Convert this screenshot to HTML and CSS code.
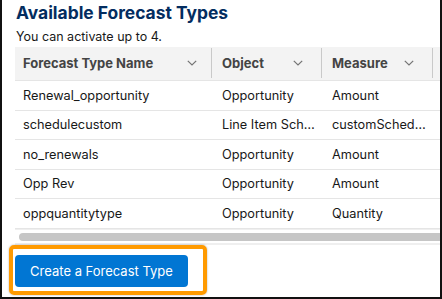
FILE: index.html
```html
<!DOCTYPE html>
<html lang="en">
<head>
    <meta charset="UTF-8">
    <meta name="viewport" content="width=device-width, initial-scale=1.0">
    <title>Available Forecast Types</title>
    <link rel="stylesheet" href="styles.css">
</head>
<body>
    <div class="frame">
        <h1 class="title">Available Forecast Types</h1>
        <p class="subtitle">You can activate up to 4.</p>

        <div class="table-wrap">
            <div class="grid">
                <div class="row head">
                    <div class="cell first">
                        <span>Forecast Type Name</span>
                        <svg class="chev" width="10" height="6" viewBox="0 0 10 6"><polyline points="0.8,0.8 5,5 9.2,0.8"/></svg>
                    </div>
                    <div class="cell">
                        <span>Object</span>
                        <svg class="chev" width="10" height="6" viewBox="0 0 10 6"><polyline points="0.8,0.8 5,5 9.2,0.8"/></svg>
                    </div>
                    <div class="cell">
                        <span>Measure</span>
                        <svg class="chev" width="10" height="6" viewBox="0 0 10 6"><polyline points="0.8,0.8 5,5 9.2,0.8"/></svg>
                    </div>
                    <div class="cell"></div>
                </div>

                <div class="row">
                    <div class="cell first">Renewal_opportunity</div>
                    <div class="cell">Opportunity</div>
                    <div class="cell">Amount</div>
                    <div class="cell"></div>
                </div>
                <div class="row">
                    <div class="cell first">schedulecustom</div>
                    <div class="cell">Line Item Sch…</div>
                    <div class="cell">customSched…</div>
                    <div class="cell"></div>
                </div>
                <div class="row">
                    <div class="cell first">no_renewals</div>
                    <div class="cell">Opportunity</div>
                    <div class="cell">Amount</div>
                    <div class="cell"></div>
                </div>
                <div class="row">
                    <div class="cell first">Opp Rev</div>
                    <div class="cell">Opportunity</div>
                    <div class="cell">Amount</div>
                    <div class="cell"></div>
                </div>
                <div class="row">
                    <div class="cell first">oppquantitytype</div>
                    <div class="cell">Opportunity</div>
                    <div class="cell">Quantity</div>
                    <div class="cell"></div>
                </div>
            </div>
        </div>

        <div class="scroll"><div class="thumb"></div></div>

        <div class="actions">
            <div class="highlight">
                <button class="btn">Create a Forecast Type</button>
            </div>
        </div>
    </div>
</body>
</html>
```

FILE: styles.css
```css
body {
    margin: 0;
    background-color: #fff;
}

.frame {
    width: 442px;
    height: 299px;
    box-sizing: border-box;
    border-left: 2px solid #111;
    border-right: 2px solid #111;
    border-bottom: 2px solid #111;
    background-color: #fff;
    overflow: hidden;
    font-family: Inter, "Noto Sans", sans-serif;
    color: #181818;
}

.title {
    margin: 0;
    padding: 3px 0 0 14px;
    font-size: 17.4px;
    line-height: 20px;
    font-weight: 700;
    color: #032d60;
}

.subtitle {
    margin: 6px 0 0;
    padding-left: 14px;
    font-size: 12.5px;
    line-height: 16px;
}

.table-wrap {
    margin: 2px 0 0 13px;
    overflow: hidden;
}

.grid {
    width: 540px;
}

.row {
    display: grid;
    grid-template-columns: 197px 110px 111px 122px;
    height: 29.5px;
    box-sizing: border-box;
    border-bottom: 1px solid #e5e5e5;
    font-size: 12.75px;
}

.row.head {
    height: 34px;
    background-color: #f3f3f3;
    font-size: 13px;
    font-weight: 700;
    color: #444;
}

.cell {
    display: flex;
    align-items: center;
    padding-left: 10px;
    white-space: nowrap;
    overflow: hidden;
}

.cell.first {
    padding-left: 8px;
}

.head .cell {
    justify-content: space-between;
    padding-right: 18px;
    border-right: 1px solid #c9c9c9;
    margin: 1px 0 2px;
}

.head .cell.first {
    padding-right: 14px;
}

.head .cell:last-child {
    border-right: none;
}

.chev {
    fill: none;
    stroke: #747474;
    stroke-width: 1.2;
}

.scroll {
    margin-left: 13px;
    padding: 3px 0 2px 4px;
    border-top: 1px solid #efefef;
    border-bottom: 2px solid #efefef;
}

.thumb {
    height: 8px;
    border-radius: 4px 0 0 4px;
    background-color: #c6c6c6;
}

.actions {
    padding-left: 7px;
}

.highlight {
    display: inline-block;
    border: 4px solid #ff9a00;
    border-radius: 5px;
    padding: 6px 15px 4px 2px;
    box-shadow: 0 0 2px rgba(0,0,0,0.35);
}

.btn {
    display: block;
    width: 173px;
    height: 32px;
    border: none;
    border-radius: 4px;
    background-color: #0176d3;
    color: #fff;
    font-family: Inter, "Noto Sans", sans-serif;
    font-size: 13px;
}
```
